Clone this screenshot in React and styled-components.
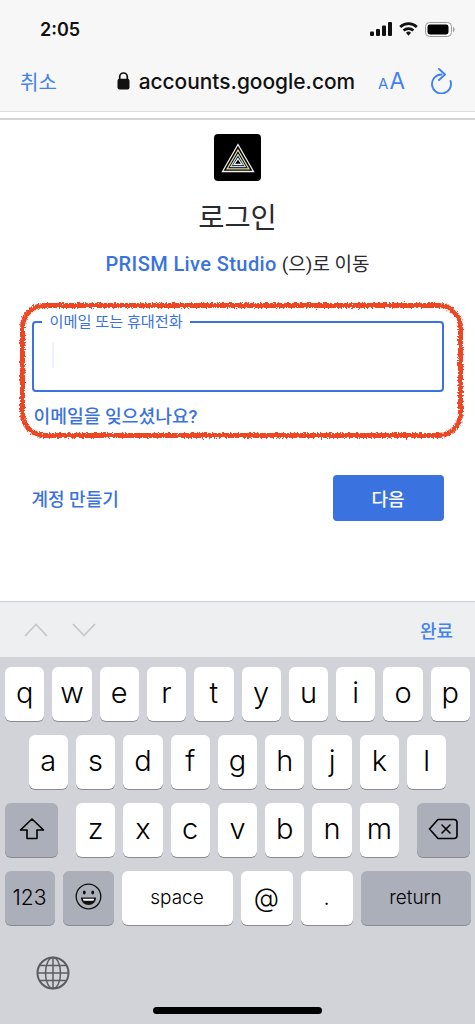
import React from 'react'
import styled, { createGlobalStyle } from 'styled-components'

const ui = `Inter, "Noto Sans CJK KR", sans-serif`
const web = `Roboto, "Noto Sans CJK KR", sans-serif`
const blue = '#3a72e0'
const iosBlue = '#3f82f0'

const Global = createGlobalStyle`
  html, body { margin: 0; padding: 0; background: #fff; }
  body { width: 475px; height: 1024px; overflow: hidden; }
`

const Screen = styled.div`
  position: relative;
  width: 475px;
  height: 1024px;
  display: flex;
  flex-direction: column;
  overflow: hidden;
  font-family: ${ui};
`

const Chrome = styled.header`
  height: 111px;
  background: #f7f7f8;
  border-bottom: 1px solid #dcdcde;
  display: flex;
  flex-direction: column;
  flex: none;
`

const StatusBar = styled.div`
  height: 55px;
  padding: 3px 20px 0 40px;
  box-sizing: border-box;
  display: flex;
  justify-content: space-between;
  align-items: center;
`

const Time = styled.span`
  font-size: 18px;
  font-weight: 600;
  color: #111;
`

const StatusIcons = styled.div`
  display: flex;
  align-items: center;
  gap: 7px;
`

const NavBar = styled.div`
  flex: 1;
  display: flex;
  align-items: center;
  padding: 0 22px 0 20px;
  margin-top: -4px;
`

const Cancel = styled.span`
  font-size: 20px;
  color: ${iosBlue};
  width: 98px;
`

const Address = styled.div`
  display: flex;
  align-items: center;
  gap: 9px;
  font-size: 20.9px;
  font-weight: 500;
  color: #111;
`

const TextSize = styled.span`
  margin-left: 23px;
  color: ${iosBlue};
  font-size: 22.5px;
  line-height: 1;
  small { font-size: 15px; margin-right: 1px; }
`

const Reload = styled.span`
  margin-left: 26px;
  display: flex;
`

const Gap = styled.div`
  height: 6px;
  border-bottom: 2px solid #d4d4d6;
  flex: none;
`

const Page = styled.main`
  flex: 1;
  display: flex;
  flex-direction: column;
  align-items: center;
  background: #fff;
  padding-top: 14px;
  font-family: ${web};
`

const Logo = styled.div`
  width: 47px;
  height: 47px;
  border-radius: 4px;
  background: #000;
  display: flex;
  align-items: center;
  justify-content: center;
`

const Title = styled.h1`
  margin: 19px 0 0;
  font-size: 28.5px;
  line-height: 38px;
  font-weight: 400;
  color: #2a2b2e;
`

const Subtitle = styled.p`
  margin: 14px 0 0;
  font-size: 19px;
  line-height: 24px;
  color: #2a2b2e;
  b { color: ${blue}; font-size: 20px; letter-spacing: .4px; font-weight: 500; margin-right: 5px; }
`

const Form = styled.div`
  width: 412px;
  margin-top: 38px;
  display: flex;
  flex-direction: column;
  align-self: center;
`

const Field = styled.fieldset`
  margin: 0;
  padding: 0 0 0 7px;
  height: 77px;
  box-sizing: border-box;
  border: 2.5px solid ${blue};
  border-radius: 4px;
  display: flex;
  flex-direction: column;
  legend {
    margin-left: 1px;
    padding: 0 7px 0 8px;
    font-size: 15.2px;
    line-height: 14px;
    color: ${blue};
  }
`

const Caret = styled.span`
  width: 2px;
  height: 26px;
  background: #eef2fa;
  margin: 13px 0 0 11px;
`

const Forgot = styled.a`
  margin: 14px 0 0 2px;
  font-size: 18.2px;
  line-height: 22px;
  font-weight: 500;
  color: ${blue};
`

const Actions = styled.div`
  width: 412px;
  margin-top: 47px;
  display: flex;
  justify-content: space-between;
  align-items: center;
`

const CreateLink = styled.a`
  font-size: 18px;
  font-weight: 500;
  color: ${blue};
`

const NextButton = styled.button`
  width: 111px;
  height: 46px;
  border: 0;
  border-radius: 4px;
  background: ${blue};
  color: #fff;
  font-family: ${web};
  font-size: 18px;
  font-weight: 500;
`

const Accessory = styled.div`
  height: 56px;
  flex: none;
  box-sizing: border-box;
  background: #eeeff1;
  border-top: 1px solid #cfcfd1;
  display: flex;
  align-items: center;
  padding: 0 22px 0 24px;
  gap: 24px;
`

const Done = styled.span`
  margin-left: auto;
  font-size: 18px;
  font-weight: 500;
  color: ${iosBlue};
  font-family: ${web};
`

const Keyboard = styled.section`
  height: 367px;
  flex: none;
  box-sizing: border-box;
  background: #d1d3d9;
  padding: 10px 5px 0;
  display: flex;
  flex-direction: column;
  gap: 14px;
`

const Row = styled.div`
  display: flex;
  gap: 8px;
  height: 54px;
  justify-content: ${p => p.$between ? 'space-between' : 'center'};
`

const Key = styled.div`
  width: ${p => p.$w || 39.3}px;
  flex: none;
  box-sizing: border-box;
  border-radius: 6px;
  background: ${p => p.$dark ? '#abafba' : '#fff'};
  box-shadow: 0 1px 0 #8a8b90;
  color: #000;
  display: flex;
  align-items: center;
  justify-content: center;
  font-size: ${p => p.$size || 29}px;
  font-weight: 300;
  padding-bottom: ${p => p.$size ? 2 : 3}px;
`

const LetterGroup = styled.div`
  display: flex;
  gap: 8px;
`

const KeyboardFooter = styled.div`
  flex: 1;
  position: relative;
  display: flex;
  flex-direction: column;
  align-items: center;
`

const Globe = styled.span`
  align-self: flex-start;
  margin: 17px 0 0 31px;
  display: flex;
`

const HomeBar = styled.div`
  width: 169px;
  height: 7px;
  border-radius: 4px;
  background: #000;
  margin-top: 17px;
`

const Scribble = styled.svg`
  position: absolute;
  left: 16px;
  top: 299px;
`

const Letters = ({ chars }) => chars.split('').map(c => <Key key={c}>{c}</Key>)

const Wifi = () => (
  <svg width="19" height="14" viewBox="0 0 19 14" fill="none" stroke="#111" strokeWidth="2.600">
    <path d="M1.200 5a12 12 0 0 1 16.600 0" />
    <path d="M4.600 8.500a7.200 7.200 0 0 1 9.800 0" />
    <path d="M7 10.700l2.500 3 2.500-3a3.500 3.500 0 0 0-5 0z" fill="#111" stroke="none" />
  </svg>
)

const Battery = () => (
  <svg width="30" height="15" viewBox="0 0 30 15">
    <rect x=".5" y=".5" width="26" height="14" rx="4" fill="none" stroke="#9a9a9c" />
    <rect x="2.500" y="2.500" width="21" height="10" rx="2.400" fill="#000" />
    <path d="M28 5v5c1-.3 1.600-1.300 1.600-2.500S29 5.300 28 5z" fill="#9a9a9c" />
  </svg>
)

export default function App() {
  return (
    <Screen>
      <Global />
      <Chrome>
        <StatusBar>
          <Time>2:05</Time>
          <StatusIcons>
            <svg width="22" height="14" viewBox="0 0 22 14" fill="#111">
              <rect x="0" y="9.500" width="4" height="4.500" rx="1" />
              <rect x="6" y="7" width="4" height="7" rx="1" />
              <rect x="12" y="3.500" width="4" height="10.500" rx="1" />
              <rect x="18" y="0" width="4" height="14" rx="1" />
            </svg>
            <Wifi />
            <Battery />
          </StatusIcons>
        </StatusBar>
        <NavBar>
          <Cancel>취소</Cancel>
          <Address>
            <svg width="13" height="18" viewBox="0 0 13 18">
              <path d="M2.700 7V4.800a3.800 3.800 0 0 1 7.600 0V7" fill="none" stroke="#111" strokeWidth="1.700" />
              <rect x="0.500" y="6.800" width="12" height="10.700" rx="2" fill="#111" />
            </svg>
            accounts.google.com
          </Address>
          <TextSize><small>A</small>A</TextSize>
          <Reload>
            <svg width="22" height="26" viewBox="0 0 22 26" fill="none" stroke={iosBlue} strokeWidth="1.900" strokeLinecap="round" strokeLinejoin="round">
              <path d="M10.500 6.500A9.500 9.500 0 1 0 19.500 13" />
              <path d="M8 1l6 5.500-6 5.500" />
            </svg>
          </Reload>
        </NavBar>
      </Chrome>
      <Gap />
      <Page>
        <Logo>
          <svg width="34" height="30" viewBox="0 0 34 30" fill="none">
            <path d="M17 1.500L32.500 28.500H1.500Z" stroke="#f1f1ee" strokeWidth="1.300" />
            <path d="M17 7L27.800 25.800H6.200Z" stroke="#e8dc9c" strokeWidth="1.300" />
            <path d="M17 11.500L24.200 23.600H9.800Z" stroke="#bcd7ea" strokeWidth="1.300" />
            <path d="M17 15.500L21 21.500H13Z" stroke="#f1f1ee" strokeWidth="1.300" />
          </svg>
        </Logo>
        <Title>로그인</Title>
        <Subtitle><b>PRISM Live Studio</b>(으)로 이동</Subtitle>
        <Form>
          <Field>
            <legend>이메일 또는 휴대전화</legend>
            <Caret />
          </Field>
          <Forgot>이메일을 잊으셨나요?</Forgot>
        </Form>
        <Actions>
          <CreateLink>계정 만들기</CreateLink>
          <NextButton>다음</NextButton>
        </Actions>
      </Page>
      <Accessory>
        <svg width="24" height="14" viewBox="0 0 24 14" fill="none" stroke="#c6c7c9" strokeWidth="1.800">
          <path d="M1 13L12 1.500 23 13" />
        </svg>
        <svg width="24" height="14" viewBox="0 0 24 14" fill="none" stroke="#c6c7c9" strokeWidth="1.800">
          <path d="M1 1l11 11.500L23 1" />
        </svg>
        <Done>완료</Done>
      </Accessory>
      <Keyboard>
        <Row><Letters chars="qwertyuiop" /></Row>
        <Row><Letters chars="asdfghjkl" /></Row>
        <Row $between>
          <Key $dark $w={53}>
            <svg width="26" height="24" viewBox="0 0 26 24" fill="none" stroke="#000" strokeWidth="1.600" strokeLinejoin="round">
              <path d="M13 2L1.500 13H8v8.500h10V13h6.500Z" />
            </svg>
          </Key>
          <LetterGroup><Letters chars="zxcvbnm" /></LetterGroup>
          <Key $dark $w={53}>
            <svg width="30" height="22" viewBox="0 0 30 22" fill="none" stroke="#000" strokeWidth="1.600" strokeLinejoin="round" strokeLinecap="round">
              <path d="M10 1.500h16a3 3 0 0 1 3 3v13a3 3 0 0 1-3 3H10L1.500 11Z" />
              <path d="M14 7l8 8M22 7l-8 8" />
            </svg>
          </Key>
        </Row>
        <Row>
          <Key $dark $w={50} $size={21}>123</Key>
          <Key $dark $w={51}>
            <svg width="27" height="27" viewBox="0 0 27 27" fill="none" stroke="#111" strokeWidth="1.300">
              <circle cx="13.500" cy="13.500" r="12.300" />
              <ellipse cx="9.300" cy="9.500" rx="1.400" ry="2" fill="#111" stroke="none" />
              <ellipse cx="17.700" cy="9.500" rx="1.400" ry="2" fill="#111" stroke="none" />
              <path d="M6 14.500h15c0 4.500-3.300 7.500-7.500 7.500S6 19 6 14.500z" fill="#111" stroke="none" />
              <path d="M8 15.700h11c-.1 1-.3 1.500-.6 2H8.600c-.3-.5-.5-1-.6-2z" fill="#fff" stroke="none" />
            </svg>
          </Key>
          <Key $w={111} $size={19}>space</Key>
          <Key $w={52} $size={26}>@</Key>
          <Key $w={52} $size={22}>.</Key>
          <Key $dark $w={110} $size={19}>return</Key>
        </Row>
        <KeyboardFooter>
          <Globe>
            <svg width="34" height="34" viewBox="0 0 34 34" fill="none" stroke="#5b5d62" strokeWidth="1.500">
              <circle cx="17" cy="17" r="15.500" strokeWidth="2" />
              <ellipse cx="17" cy="17" rx="7.500" ry="15.500" />
              <path d="M17 1.500v31M1.500 17h31M4 9.500h26M4 24.500h26" />
            </svg>
          </Globe>
          <HomeBar />
        </KeyboardFooter>
      </Keyboard>
      <Scribble width="450" height="142" viewBox="0 0 450 142">
        <defs>
          <filter id="rough" x="-5%" y="-10%" width="110%" height="120%">
            <feTurbulence type="fractalNoise" baseFrequency="0.6" numOctaves="2" seed="4" />
            <feDisplacementMap in="SourceGraphic" scale="5" xChannelSelector="R" yChannelSelector="G" />
          </filter>
        </defs>
        <rect x="6.500" y="6.500" width="438" height="130" rx="22" fill="none" stroke="#ee4423" strokeWidth="5" filter="url(#rough)" />
      </Scribble>
    </Screen>
  )
}
